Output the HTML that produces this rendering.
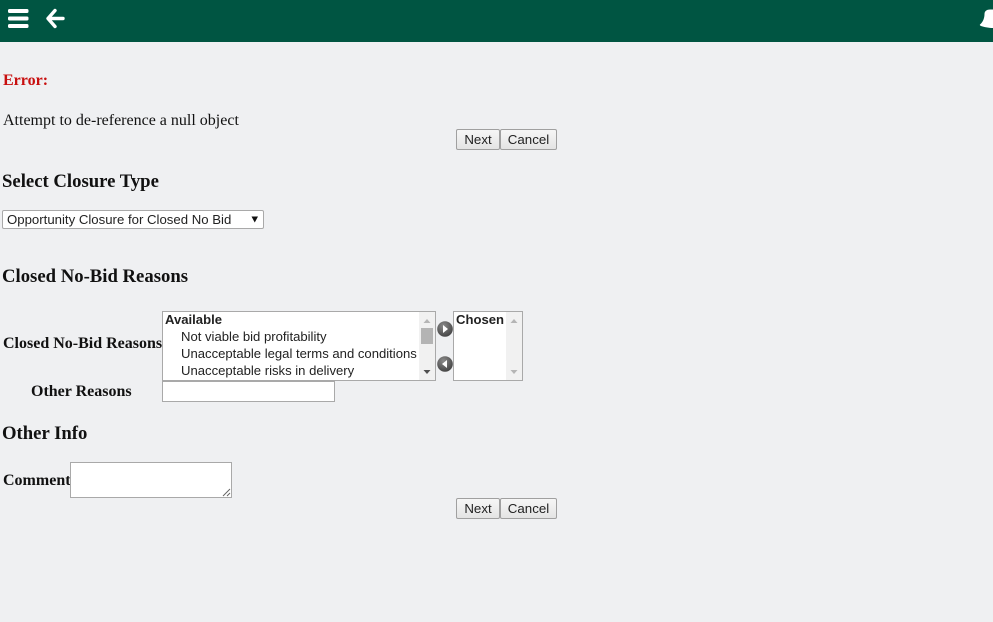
<!DOCTYPE html>
<html>
<head>
<meta charset="utf-8">
<style>
html,body{margin:0;padding:0;width:993px;height:622px;overflow:hidden;background:#eff0f2;}
body{position:relative;font-family:"Liberation Serif",serif;color:#111;}
.a{position:absolute;white-space:nowrap;}
.s{font-family:"Liberation Sans",sans-serif;font-size:13.1px;line-height:17px;color:#222;}
.h{font-weight:bold;font-size:18.72px;line-height:20px;color:#111;}
.l{font-weight:bold;font-size:16px;line-height:18px;color:#111;}
.b{box-sizing:border-box;height:21px;border:1px solid #a0a0a0;border-radius:2px;background:linear-gradient(#f6f6f6,#e4e4e4);font-family:"Liberation Sans",sans-serif;font-size:13.3px;line-height:19px;text-align:center;color:#222;}
.box{box-sizing:border-box;border:1px solid #a9a9a9;background:#fff;}
</style>
</head>
<body>
<div class="a" style="left:0;top:0;width:993px;height:42px;background:#005542;"></div>
<svg class="a" style="left:0;top:0" width="100" height="42" viewBox="0 0 100 42">
<g fill="#fff">
<rect x="8" y="9" width="20.500" height="4" rx="1.500"/>
<rect x="8" y="16.500" width="20.500" height="4" rx="1.500"/>
<rect x="8" y="24" width="20.500" height="4" rx="1.500"/>
</g>
<path d="M55 10.500 L48 18.500 L55 26.500 M48.500 18.500 H63 " fill="none" stroke="#fff" stroke-width="3.400" stroke-linecap="round" stroke-linejoin="round"/>
</svg>
<svg class="a" style="left:975px;top:0" width="18" height="42" viewBox="0 0 18 42">
<path d="M5 24.500 C8 22 9.500 18 9.500 14 C9.500 11 12 9.500 15 9.500 H18 V28 C14 28 9 27 6 26 C5 25.500 4.500 25 5 24.500 Z" fill="#fff"/>
</svg>

<div class="a" style="left:3px;top:72px;font-size:16px;line-height:18px;font-weight:bold;color:#c80f0f;">Error:</div>
<div class="a" style="left:3px;top:112px;font-size:16px;line-height:18px;color:#111;">Attempt to de-reference a null object</div>

<div class="a b" style="left:456px;top:129px;width:44px;">Next</div>
<div class="a b" style="left:500px;top:129px;width:57px;">Cancel</div>

<div class="a h" style="left:2px;top:172px;">Select Closure Type</div>

<div class="a box s" style="left:2px;top:210px;width:262px;height:19px;border-radius:2px;padding-left:4px;line-height:17px;font-size:13.2px;">Opportunity Closure for Closed No Bid</div>
<svg class="a" style="left:251px;top:216px" width="8" height="7"><path d="M0.500 0.500H7L3.750 6.500Z" fill="#111"/></svg>

<div class="a h" style="left:2px;top:267px;">Closed No-Bid Reasons</div>

<div class="a l" style="left:3px;top:335px;">Closed No-Bid Reasons</div>

<div class="a box" style="left:162px;top:311px;width:274px;height:70px;overflow:hidden;"></div>
<div class="a s" style="left:165px;top:311px;font-weight:bold;">Available</div>
<div class="a s" style="left:181px;top:328px;">Not viable bid profitability</div>
<div class="a s" style="left:181px;top:345px;">Unacceptable legal terms and conditions</div>
<div class="a s" style="left:181px;top:362px;">Unacceptable risks in delivery</div>
<div class="a" style="left:419px;top:312px;width:16px;height:68px;background:#f1f1f1;"></div>
<div class="a" style="left:421px;top:328px;width:12px;height:16px;background:#b4b4b4;"></div>
<svg class="a" style="left:419px;top:312px" width="16" height="68">
<path d="M4.500 11L8 7L11.500 11Z" fill="#b5b5b5"/>
<path d="M4.500 58H11.500L8 62Z" fill="#505050"/>
</svg>

<svg class="a" style="left:436px;top:320px" width="18" height="54" viewBox="0 0 18 54">
<defs><radialGradient id="g" cx="0.400" cy="0.300" r="0.800"><stop offset="0" stop-color="#8a8a8a"/><stop offset="1" stop-color="#3c3c3c"/></radialGradient></defs>
<circle cx="9" cy="9" r="7.800" fill="url(#g)"/>
<path d="M7 5L12 9L7 13Z" fill="#fff"/>
<circle cx="9" cy="44" r="7.800" fill="url(#g)"/>
<path d="M11 40L6 44L11 48Z" fill="#fff"/>
</svg>

<div class="a box" style="left:453px;top:311px;width:70px;height:70px;"></div>
<div class="a s" style="left:456px;top:311px;font-weight:bold;">Chosen</div>
<div class="a" style="left:506px;top:312px;width:16px;height:68px;background:#f1f1f1;"></div>
<svg class="a" style="left:506px;top:312px" width="16" height="68">
<path d="M4.500 11L8 7L11.500 11Z" fill="#b5b5b5"/>
<path d="M4.500 58H11.500L8 62Z" fill="#b5b5b5"/>
</svg>

<div class="a l" style="left:31px;top:383px;">Other Reasons</div>
<div class="a box" style="left:162px;top:381px;width:173px;height:21px;"></div>

<div class="a h" style="left:2px;top:424px;">Other Info</div>

<div class="a l" style="left:3px;top:472px;">Comment</div>
<div class="a box" style="left:70px;top:462px;width:162px;height:36px;"></div>
<svg class="a" style="left:222px;top:488px" width="9" height="9">
<path d="M1 8L8 1M5 8L8 5" stroke="#666" stroke-width="1" fill="none"/>
</svg>

<div class="a b" style="left:456px;top:498px;width:44px;">Next</div>
<div class="a b" style="left:500px;top:498px;width:57px;">Cancel</div>
</body>
</html>
